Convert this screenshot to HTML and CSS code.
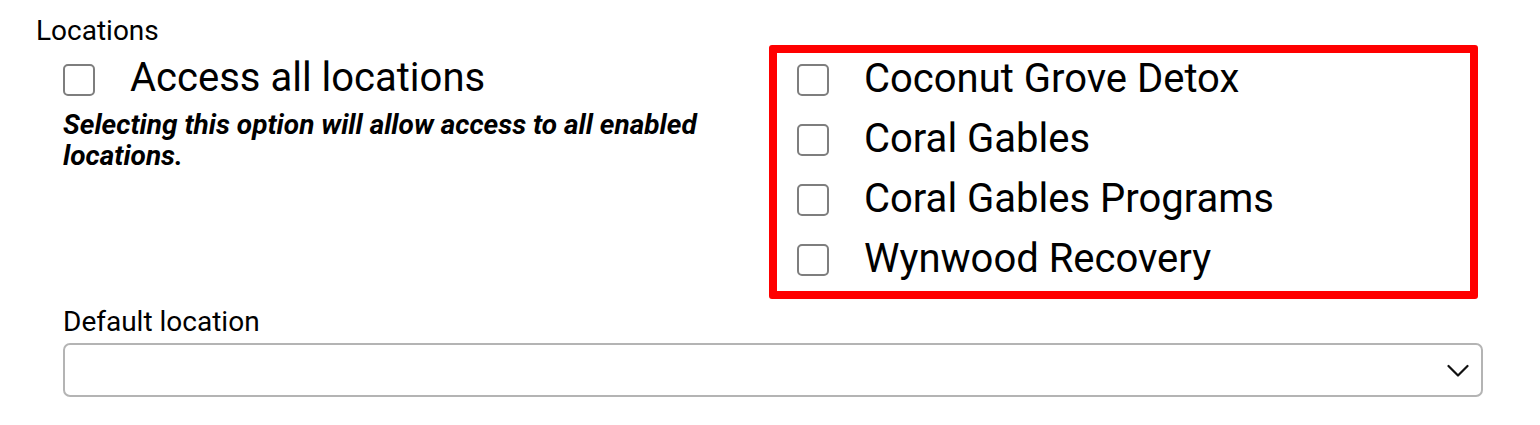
FILE: index.html
```html
<!DOCTYPE html>
<html lang="en">
<head>
<meta charset="utf-8">
<title>Locations</title>
<link rel="stylesheet" href="styles.css">
</head>
<body>
<section class="locations">
  <div class="section-label">Locations</div>
  <div class="inner">
    <div class="grid">
      <div class="left-col">
        <label class="check-row">
          <span class="checkbox"></span>
          <span class="check-text">Access all locations</span>
        </label>
        <p class="hint">Selecting this option will allow access to all enabled locations.</p>
      </div>
      <div class="right-col">
        <div class="highlight">
          <label class="check-row"><span class="checkbox"></span><span class="check-text">Coconut Grove Detox</span></label>
          <label class="check-row"><span class="checkbox"></span><span class="check-text">Coral Gables</span></label>
          <label class="check-row"><span class="checkbox"></span><span class="check-text">Coral Gables Programs</span></label>
          <label class="check-row"><span class="checkbox"></span><span class="check-text">Wynwood Recovery</span></label>
        </div>
      </div>
    </div>
    <div class="field">
      <div class="field-label">Default location</div>
      <div class="select">
        <svg class="chevron" width="22" height="14" viewBox="0 0 22 14"><polyline points="1.5,2 11,11.5 20.5,2" fill="none" stroke="#111" stroke-width="2.2" stroke-linecap="round" stroke-linejoin="round"/></svg>
      </div>
    </div>
  </div>
</section>
</body>
</html>
```
FILE: styles.css
```css
* { box-sizing: border-box; }
html, body { margin: 0; padding: 0; background: #fff; }
body {
  font-family: Roboto, "Liberation Sans", Arial, sans-serif;
  color: #000;
}
.locations {
  padding: 0 0 0 36px;
  width: 1540px;
}
.section-label {
  font-size: 28px;
  line-height: 32px;
  padding-top: 15px;
}
.inner {
  margin-left: 27px;
  width: 1420px;
}
.grid {
  display: grid;
  grid-template-columns: 706px 709px;
  margin-top: -2px;
}
.left-col {
  padding-top: 9px;
}
.check-row {
  display: flex;
  align-items: flex-start;
  font-size: 40px;
  line-height: 48px;
  height: 48px;
}
.checkbox {
  flex: none;
  width: 32px;
  height: 32px;
  margin-top: 10px;
  margin-right: 35px;
  border: 2px solid #7e7e7e;
  border-radius: 5px;
  background: #fff;
}
.check-text { white-space: nowrap; }
.hint {
  margin: 7px 0 0 0;
  font-size: 28px;
  line-height: 31px;
  font-weight: 700;
  font-style: italic;
  max-width: 700px;
}
.highlight {
  border: 8px solid #ff0000;
  border-radius: 3px;
  padding: 2px 0 8px 20px;
  display: flex;
  flex-direction: column;
  gap: 12px;
  height: 254px;
}
.highlight .checkbox { margin-top: 9px; }
.field {
  margin-top: 6px;
}
.field-label {
  font-size: 28px;
  line-height: 34px;
}
.select {
  margin-top: 4px;
  height: 54px;
  border: 2px solid #b4b4b4;
  border-radius: 7px;
  display: flex;
  align-items: center;
  justify-content: flex-end;
  padding-right: 12px;
}
.chevron { display: block; margin-top: 2px; }
```
